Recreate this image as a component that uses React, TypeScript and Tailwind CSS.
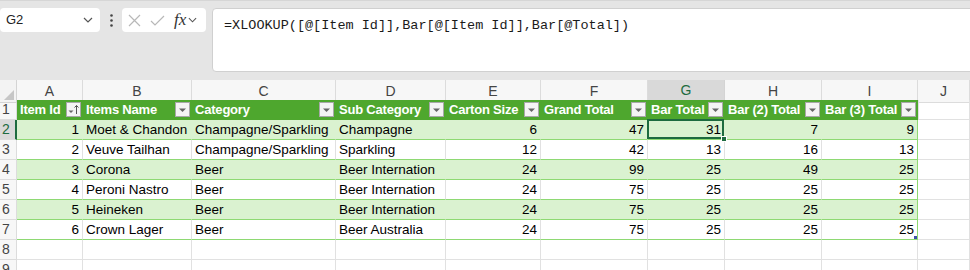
import React from 'react'

const cols = ['A', 'B', 'C', 'D', 'E', 'F', 'G', 'H', 'I', 'J']
const headers = ['Item Id', 'Items Name', 'Category', 'Sub Category', 'Carton Size', 'Grand Total', 'Bar Total', 'Bar (2) Total', 'Bar (3) Total']
const numeric = [true, false, false, false, true, true, true, true, true]

const rows: (string | number)[][] = [
  [1, 'Moet & Chandon', 'Champagne/Sparkling', 'Champagne', 6, 47, 31, 7, 9],
  [2, 'Veuve Tailhan', 'Champagne/Sparkling', 'Sparkling', 12, 42, 13, 16, 13],
  [3, 'Corona', 'Beer', 'Beer Internation', 24, 99, 25, 49, 25],
  [4, 'Peroni Nastro', 'Beer', 'Beer Internation', 24, 75, 25, 25, 25],
  [5, 'Heineken', 'Beer', 'Beer Internation', 24, 75, 25, 25, 25],
  [6, 'Crown Lager', 'Beer', 'Beer Australia', 24, 75, 25, 25, 25],
]

const gridCols = 'grid grid-cols-[17px_66px_109px_144px_110px_95px_107px_77px_97px_96px_1fr]'

function FilterButton({ sort }: { sort?: boolean }) {
  return (
    <div className="absolute right-[2px] top-[2px] w-[15px] h-[15px] bg-[#f4f4f4] border border-[#a8a8a8] flex items-center justify-center">
      {sort ? (
        <svg width="13" height="11" viewBox="0 0 13 11">
          <path d="M1.5 6.5h5l-2.5 2.5z" fill="#666" />
          <path d="M9.5 10V1.5M7.5 3.5l2-2 2 2" stroke="#555" strokeWidth="1" fill="none" />
        </svg>
      ) : (
        <svg width="9" height="6" viewBox="0 0 9 6">
          <path d="M1 1.5h7l-3.5 3.5z" fill="#666" />
        </svg>
      )}
    </div>
  )
}

function Chevron({ w = 10 }: { w?: number }) {
  return (
    <svg width={w} height="6" viewBox="0 0 10 6">
      <path d="M1 1l4 4 4-4" stroke="#555" strokeWidth="1.2" fill="none" />
    </svg>
  )
}

export default function App() {
  return (
    <div className="w-[970px] h-[270px] overflow-hidden bg-white" style={{ fontFamily: '"Liberation Sans", Arial, sans-serif' }}>
      {/* Formula bar */}
      <div className="h-[80px] bg-[#e5e5e5] border-t border-[#d6d6d6] flex items-start pt-[7px]">
        <div className="w-[100px] h-[24px] bg-white rounded-[4px] flex items-center justify-between pl-[6px] pr-[7px] text-[13px] text-[#222]">
          <span>G2</span>
          <Chevron />
        </div>
        <div className="w-[22px] h-[24px] flex items-center justify-center">
          <svg width="3" height="13" viewBox="0 0 3 13">
            <circle cx="1.5" cy="1.5" r="1.3" fill="#444" />
            <circle cx="1.5" cy="6.5" r="1.3" fill="#444" />
            <circle cx="1.5" cy="11.5" r="1.3" fill="#444" />
          </svg>
        </div>
        <div className="w-[84px] h-[24px] bg-white rounded-[4px] flex items-center pl-[6px] gap-[9px]">
          <svg width="13" height="13" viewBox="0 0 13 13">
            <path d="M1 1l11 11M12 1L1 12" stroke="#b8b8b8" strokeWidth="1.2" />
          </svg>
          <svg width="15" height="11" viewBox="0 0 15 11">
            <path d="M1 6l4 4 9-9" stroke="#b8b8b8" strokeWidth="1.2" fill="none" />
          </svg>
          <div className="flex items-center gap-[2px]">
            <span className="italic text-[17px] leading-none text-[#333] -mt-[2px]" style={{ fontFamily: '"Liberation Serif", "Times New Roman", serif' }}>fx</span>
            <Chevron w={9} />
          </div>
        </div>
        <div className="ml-[6px] flex-1 -mr-[10px] h-[64px] bg-white rounded-[4px] border border-[#d0d0d0] pl-[11px] pt-[7px] text-[13.5px] text-[#1a1a1a]" style={{ fontFamily: '"Liberation Mono", "DejaVu Sans Mono", monospace' }}>
          =XLOOKUP([@[Item Id]],Bar[@[Item Id]],Bar[@Total])
        </div>
      </div>

      {/* Column headers */}
      <div className={`${gridCols} h-[20px] text-[14px] text-[#444]`}>
        <div className="bg-[#f3f3f3] border-r border-b border-[#d4d4d4] relative">
          <svg className="absolute right-[2px] bottom-[2px]" width="10" height="10" viewBox="0 0 10 10">
            <path d="M10 0v10H0z" fill="#c6c6c6" />
          </svg>
        </div>
        {cols.map((c) => (
          <div
            key={c}
            className={
              c === 'G'
                ? 'bg-[#d9d9d9] border-r border-[#d4d4d4] border-b-2 border-b-[#1d6b3f] text-[#1d6b3f] flex items-center justify-center'
                : 'bg-[#f7f7f7] border-r border-b border-[#dcdcdc] flex items-center justify-center'
            }
          >
            {c}
          </div>
        ))}
        <div className="bg-[#f7f7f7] border-b border-[#dcdcdc]" />
      </div>

      {/* Header row */}
      <div className={`${gridCols} h-[20px] text-[13px]`}>
        <div className="bg-[#f7f7f7] border-r border-b border-[#dcdcdc] text-[#444] text-[14px] pl-[2px] leading-[19px]">1</div>
        {headers.map((h, i) => (
          <div key={h} className="relative bg-[#4ea72e] border-b border-[#4ea72e] text-white font-bold tracking-[-0.2px] pl-[3px] leading-[19px] whitespace-nowrap overflow-hidden">
            {h}
            <FilterButton sort={i === 0} />
          </div>
        ))}
        <div className="border-l border-[#e1e1e1] border-r border-b" />
        <div className="border-b border-[#e1e1e1]" />
      </div>

      {/* Data rows */}
      {rows.map((r, ri) => {
        const band = ri % 2 === 0
        const rowNum = ri + 2
        return (
          <div key={ri} className={`${gridCols} h-[20px] text-[13.5px] text-black`}>
            <div
              className={
                rowNum === 2
                  ? 'bg-[#d9d9d9] border-r-2 border-r-[#1d6b3f] border-b border-b-[#dcdcdc] text-[#1d6b3f] text-[14px] pl-[2px] leading-[19px]'
                  : 'bg-[#f7f7f7] border-r border-b border-[#dcdcdc] text-[#444] text-[14px] pl-[2px] leading-[19px]'
              }
            >
              {rowNum}
            </div>
            {r.map((v, ci) => {
              const last = ci === 8
              const selected = ri === 0 && ci === 6
              const vcls = last ? 'border-r-[#8ed973]' : band ? 'border-r-[#daf2d0]' : 'border-r-[#e1e1e1]'
              return (
                <div
                  key={ci}
                  className={`relative border-r border-b border-b-[#8ed973] ${vcls} ${band ? 'bg-[#daf2d0]' : 'bg-white'} leading-[19px] whitespace-nowrap ${selected ? 'overflow-visible z-10' : 'overflow-hidden'} ${numeric[ci] ? 'text-right pr-[3px]' : 'pl-[3px]'}`}
                >
                  {v}
                  {selected && (
                    <>
                      <div className="absolute -left-[1px] -top-[1px] right-0 bottom-0 border-2 border-[#1d6b3f]" />
                      <div className="absolute -right-[3px] -bottom-[3px] w-[6px] h-[6px] bg-[#1d6b3f] border border-white" />
                    </>
                  )}
                  {ri === 5 && last && <div className="absolute right-0 bottom-0 w-[3px] h-[3px] bg-[#3f51a8]" />}
                </div>
              )
            })}
            <div className="border-r border-b border-[#e1e1e1]" />
            <div className="border-b border-[#e1e1e1]" />
          </div>
        )
      })}

      {/* Empty rows */}
      {[8, 9].map((n) => (
        <div key={n} className={`${gridCols} h-[20px]`}>
          <div className="bg-[#f7f7f7] border-r border-b border-[#dcdcdc] text-[#444] text-[14px] pl-[2px] leading-[19px]">{n}</div>
          {cols.map((c) => (
            <div key={c} className="border-r border-b border-[#e1e1e1]" />
          ))}
          <div className="border-b border-[#e1e1e1]" />
        </div>
      ))}
    </div>
  )
}
